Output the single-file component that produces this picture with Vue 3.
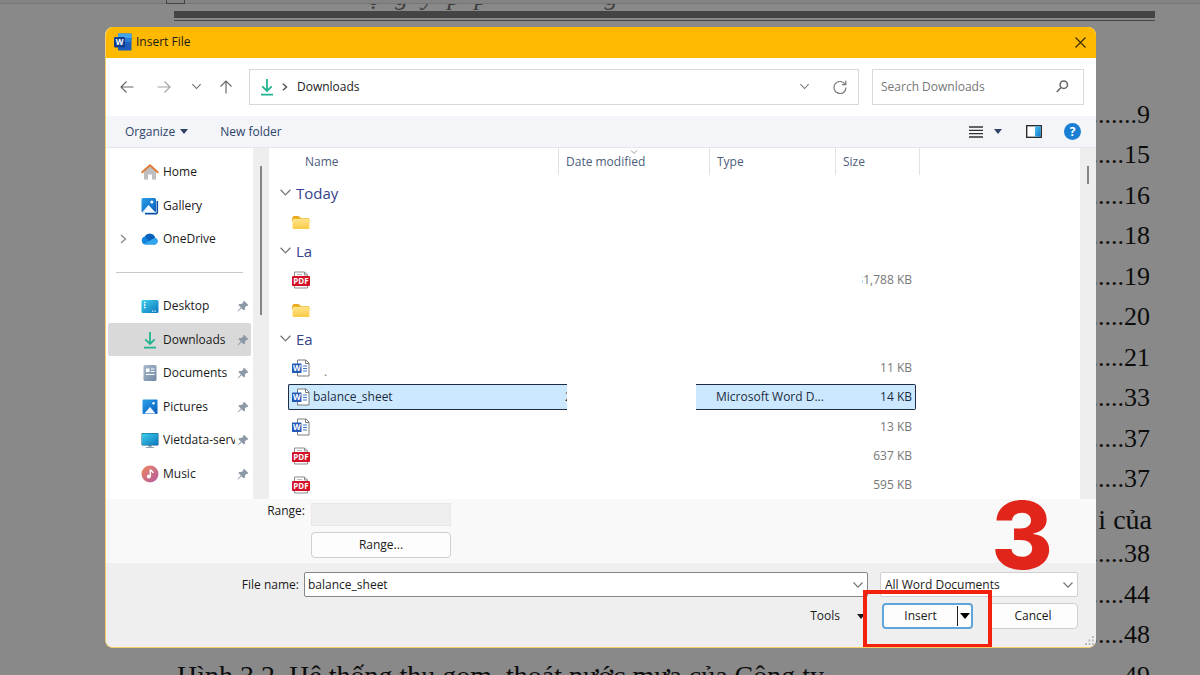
<script setup>
import { ref } from 'vue'

const fileName = ref('balance_sheet')
const query = ref('')
const range = ref('')
const fileType = ref('All Word Documents')

const pageRefs = [
  { page: '9' },
  { page: '15' },
  { page: '16' },
  { page: '18' },
  { page: '19' },
  { page: '20' },
  { page: '21' },
  { page: '33' },
  { page: '37' },
  { page: '37' },
  { words: 'i của' },
  { page: '38' },
  { page: '44' },
  { page: '48' },
]

const places = [
  { name: 'Home', icon: 'home' },
  { name: 'Gallery', icon: 'gallery' },
  { name: 'OneDrive', icon: 'cloud', expandable: true },
  { separator: true },
  { name: 'Desktop', icon: 'desktop', pinned: true },
  { name: 'Downloads', icon: 'download', pinned: true, current: true },
  { name: 'Documents', icon: 'documents', pinned: true },
  { name: 'Pictures', icon: 'pictures', pinned: true },
  { name: 'Vietdata-server', icon: 'monitor', pinned: true },
  { name: 'Music', icon: 'music', pinned: true },
]

const rows = [
  { group: 'Today' },
  { icon: 'folder' },
  { group: 'La' },
  { icon: 'pdf', size: '31,788 KB' },
  { icon: 'folder' },
  { group: 'Ea' },
  { icon: 'word-file', size: '11 KB', mark: '.' },
  { icon: 'word-file', name: 'balance_sheet', date: '2', type: 'Microsoft Word D...', size: '14 KB', selected: true },
  { icon: 'word-file', size: '13 KB' },
  { icon: 'pdf', size: '637 KB' },
  { icon: 'pdf', size: '595 KB' },
]
</script>

<template>
  <main class="stage">
    <svg class="sprite" aria-hidden="true">
      <defs>
        <linearGradient id="g-sky" x1="0" y1="0" x2="1" y2="1">
          <stop offset="0" stop-color="#2aa0ea" /><stop offset="1" stop-color="#0a5cbc" />
        </linearGradient>
        <linearGradient id="g-teal" x1="0" y1="0" x2="1" y2="1">
          <stop offset="0" stop-color="#3fd0e8" /><stop offset="1" stop-color="#0c76c0" />
        </linearGradient>
        <linearGradient id="g-folder" x1="0" y1="0" x2="0" y2="1">
          <stop offset="0" stop-color="#ffe48a" /><stop offset="1" stop-color="#fbcb45" />
        </linearGradient>
        <linearGradient id="g-music" x1="0" y1="0" x2="1" y2="1">
          <stop offset="0" stop-color="#ee8a5c" /><stop offset="1" stop-color="#b158a4" />
        </linearGradient>
        <linearGradient id="g-doc" x1="0" y1="0" x2="1" y2="1">
          <stop offset="0" stop-color="#a9bacd" /><stop offset="1" stop-color="#7189a6" />
        </linearGradient>
        <linearGradient id="g-pane" x1="0" y1="0" x2="1" y2="1">
          <stop offset="0" stop-color="#52c3f1" /><stop offset="1" stop-color="#0b74c9" />
        </linearGradient>
      </defs>
      <symbol id="i-home" viewBox="0 0 18 18">
        <path d="M3 8.5 9 3l6 5.500V16.500h-4v-5H7v5H3z" fill="#bfbfc2" />
        <path d="M1.300 9.300 9 2.300l7.700 7" fill="none" stroke="#e07a35" stroke-width="2" stroke-linecap="round" stroke-linejoin="round" />
      </symbol>
      <symbol id="i-gallery" viewBox="0 0 18 18">
        <path d="M16.300 4v11.300a1.500 1.500 0 0 1-1.500 1.500H4" fill="none" stroke="#0c50a5" stroke-width="1.600" />
        <rect x="0.500" y="1" width="14.500" height="14.500" rx="1.500" fill="url(#g-sky)" />
        <path d="M1 15.500 7.500 8l7 7.500z" fill="#f4faff" />
        <circle cx="10.800" cy="5" r="1.500" fill="#fff" />
      </symbol>
      <symbol id="i-cloud" viewBox="0 0 18 18">
        <path d="M4.500 14.500a4 4 0 0 1-.6-7.900 5.500 5.500 0 0 1 10.200 1.200 3.500 3.500 0 0 1 .2 6.700z" fill="#1384dc" />
        <path d="M3.900 6.600a5.500 5.500 0 0 1 10.200 1.200L8 11z" fill="#0a61b8" />
        <path d="M3 14 14.200 7.800a3.500 3.500 0 0 1 .1 6.700H4.500z" fill="#32a7ef" />
      </symbol>
      <symbol id="i-desktop" viewBox="0 0 18 18">
        <rect x="0.500" y="3" width="17" height="13" rx="1.500" fill="url(#g-teal)" />
        <path d="M3 5.500h1.500M3 8h1.500M3 10.500h1.500" stroke="#fff" stroke-width="1.400" />
        <path d="M11 14.200h1.300M13.500 14.200h1.300" stroke="#d5f1ff" stroke-width="1.200" />
      </symbol>
      <symbol id="i-download" viewBox="0 0 18 18">
        <path d="M9 1v12M4.300 8.300 9 13l4.700-4.700M3 16.700h12" fill="none" stroke="#22b491" stroke-width="1.800" />
      </symbol>
      <symbol id="i-documents" viewBox="0 0 18 18">
        <rect x="2.500" y="1" width="13" height="16" rx="1.500" fill="url(#g-doc)" />
        <path d="M5 4.500h3.500v3.500H5z" fill="#fff" />
        <path d="M10 5h3.500M10 7.500h3.500M5 10.500h8.500" stroke="#fff" stroke-width="1.200" />
      </symbol>
      <symbol id="i-pictures" viewBox="0 0 18 18">
        <rect x="1.500" y="1.500" width="15" height="14.500" rx="1" fill="url(#g-sky)" />
        <path d="M3.500 15.500 9 9l5.500 6.500z" fill="#f4faff" />
        <circle cx="12.500" cy="5.300" r="1.200" fill="#fff" />
      </symbol>
      <symbol id="i-monitor" viewBox="0 0 18 18">
        <path d="M7.500 14h3v2h2.500v1H5v-1h2.500z" fill="#8ea6b5" />
        <rect x="0.500" y="2" width="17" height="12.500" rx="1" fill="#0e5a80" />
        <rect x="1" y="2.500" width="16" height="11.500" rx="1" fill="url(#g-teal)" />
      </symbol>
      <symbol id="i-music" viewBox="0 0 18 18">
        <circle cx="9" cy="9" r="8.500" fill="url(#g-music)" />
        <path d="M9.300 11.500V4.500c.8 1.500 2.700 1.600 2.700 3.500" fill="none" stroke="#fff" stroke-width="1.500" />
        <circle cx="7.800" cy="11.600" r="2" fill="#fff" />
      </symbol>
      <symbol id="i-pin" viewBox="0 0 12 12">
        <path d="M7 .8 11.300 5l-1 .9-.7-.1-1.700 1.800.1 2-1 1L4.600 8.200 1.300 11.300l-.6.100.1-.6L3.900 7.500 1.300 5l1.100-1 2.100.1L6.300 2.400l-.1-.8z" fill="#8c98a5" />
      </symbol>
      <symbol id="i-folder" viewBox="0 0 18 18">
        <path d="M.5 4.500A1.500 1.500 0 0 1 2 3h4.500l2 2h7.500a1.500 1.500 0 0 1 1.500 1.500V9H.5z" fill="#e8a820" />
        <rect x="0.500" y="5.500" width="17" height="10.500" rx="1.300" fill="url(#g-folder)" />
        <path d="M.5 7V5.500h7l1-1" fill="none" stroke="#f2b52c" />
      </symbol>
      <symbol id="i-pdf" viewBox="0 0 18 18">
        <path d="M2.500 6V1h10l3 3v13h-13z" fill="#fff" stroke="#8b8b8b" />
        <path d="M12.500 1v3h3" fill="none" stroke="#8b8b8b" />
        <path d="M5 3.500h5" stroke="#bbb" />
        <rect x="0" y="5" width="18" height="10" rx="1" fill="#d40f27" />
      </symbol>
      <symbol id="i-word-file" viewBox="0 0 18 18">
        <path d="M5.500 1h8.500l3 3v13H5.500z" fill="#fff" stroke="#7d7d7d" />
        <path d="M13.500 1v3.500H17" fill="none" stroke="#7d7d7d" />
        <path d="M11 7h4M11 9.500h4M11 12h4" stroke="#3b77c8" />
        <rect x="0" y="4.500" width="9.500" height="9.500" rx="0.500" fill="#2459b8" />
      </symbol>
      <symbol id="i-word" viewBox="0 0 18 18">
        <rect x="4" y="0.500" width="13.500" height="17" rx="1" fill="#1b5cbd" />
        <path d="M4 .5h12.500a1 1 0 0 1 1 1V5H4z" fill="#41a5ee" />
        <path d="M4 5h13.500v4H4z" fill="#2b7cd3" />
        <rect x="0" y="4" width="11" height="10.500" rx="1" fill="#103f91" />
      </symbol>
      <symbol id="i-chevron" viewBox="0 0 12 12">
        <path d="M1.500 3.500 6 8.200l4.500-4.700" fill="none" stroke="currentColor" stroke-width="1.200" />
      </symbol>
      <symbol id="i-caret" viewBox="0 0 10 6">
        <path d="M0 0h10L5 6z" fill="currentColor" />
      </symbol>
    </svg>

    <section class="paper" aria-label="Document">
      <div class="ruler"><span class="tab-stop"></span></div>
      <div class="running-head" aria-hidden="true">
        <i>ọ</i><i>g</i><i>y</i><i>p</i><i>p</i><i>g</i>
      </div>
      <div class="double-rule"></div>
      <ol class="contents">
        <li v-for="(r, i) in pageRefs" :key="i" :class="{ words: r.words }">
          <span v-if="r.words">{{ r.words }}</span>
          <span v-else>.......{{ r.page }}</span>
        </li>
        <li class="caption">
          <span class="caption-text">Hình 3.2. Hệ thống thu gom, thoát nước mưa của Công ty</span>
          <span>49</span>
        </li>
      </ol>
    </section>

    <section class="dialog" role="dialog" aria-labelledby="dialog-title">
      <header class="titlebar">
        <svg class="icon" viewBox="0 0 18 18">
          <use href="#i-word" />
          <text x="5.500" y="12.300" class="glyph w-large">W</text>
        </svg>
        <h1 id="dialog-title">Insert File</h1>
        <button class="plain close" aria-label="Close">
          <svg width="11" height="11" viewBox="0 0 11 11"><path d="M.5.5l10 10M10.500.5l-10 10" stroke="#3a2c00" stroke-width="1.200" /></svg>
        </button>
      </header>

      <nav class="navbar" aria-label="Folder navigation">
        <button class="plain" aria-label="Back">
          <svg width="14" height="14" viewBox="0 0 14 14" class="arrow"><path d="M13.500 7H1M6.500 1.500 1 7l5.500 5.500" /></svg>
        </button>
        <button class="plain dim" aria-label="Forward">
          <svg width="14" height="14" viewBox="0 0 14 14" class="arrow"><path d="M.5 7H13M7.500 1.500 13 7l-5.500 5.500" /></svg>
        </button>
        <button class="plain small" aria-label="Recent locations">
          <svg width="11" height="11"><use href="#i-chevron" /></svg>
        </button>
        <button class="plain" aria-label="Up">
          <svg width="14" height="14" viewBox="0 0 14 14" class="arrow"><path d="M7 13.500V1M1.500 6.500 7 1l5.500 5.500" /></svg>
        </button>
        <div class="address">
          <svg class="icon"><use href="#i-download" /></svg>
          <svg width="6" height="8" viewBox="0 0 6 8" class="crumb"><path d="M1 .8 4.500 4 1 7.200" /></svg>
          <span>Downloads</span>
          <button class="plain push" aria-label="Previous locations">
            <svg width="11" height="11"><use href="#i-chevron" /></svg>
          </button>
          <button class="plain" aria-label="Refresh">
            <svg width="14" height="14" viewBox="0 0 14 14" class="arrow"><path d="M12.200 4.500A6 6 0 1 0 13 7.500M12.800.8v3.900H9" /></svg>
          </button>
        </div>
        <label class="search">
          <input v-model="query" type="text" placeholder="Search Downloads" aria-label="Search Downloads" />
          <svg width="13" height="13" viewBox="0 0 13 13"><circle cx="7.800" cy="4.700" r="3.700" /><path d="M5 7.500.8 12" /></svg>
        </label>
      </nav>

      <div class="commands">
        <button class="plain organize">Organize <svg width="8" height="5"><use href="#i-caret" /></svg></button>
        <button class="plain">New folder</button>
        <button class="plain view" aria-label="View">
          <svg width="14" height="12" viewBox="0 0 14 12"><path d="M0 1h14M0 4.300h14M0 7.600h14M0 11h14" stroke="#333" stroke-width="1.300" /></svg>
          <svg width="8" height="5"><use href="#i-caret" /></svg>
        </button>
        <button class="plain pane" aria-label="Preview pane">
          <svg width="16" height="13" viewBox="0 0 16 13"><rect x="0.700" y="0.700" width="14.600" height="11.600" fill="#fff" stroke="#222" stroke-width="1.300" /><rect x="9" y="1.300" width="5.700" height="10.400" fill="url(#g-pane)" /></svg>
        </button>
        <button class="plain help" aria-label="Help">?</button>
      </div>

      <div class="browser">
        <ul class="places">
          <li v-for="(p, i) in places" :key="i" :class="{ current: p.current }">
            <hr v-if="p.separator" />
            <a v-else href="#">
              <span class="twist">
                <svg v-if="p.expandable" width="7" height="10" viewBox="0 0 7 10"><path d="M1 1l4.500 4L1 9" /></svg>
              </span>
              <svg class="icon"><use :href="'#i-' + p.icon" /></svg>
              <span class="place-name">{{ p.name }}</span>
              <svg v-if="p.pinned" class="pin"><use href="#i-pin" /></svg>
            </a>
          </li>
        </ul>
        <div class="track"><span class="thumb long"></span></div>

        <table class="files">
          <colgroup>
            <col class="c-name" /><col class="c-date" /><col class="c-type" /><col class="c-size" /><col />
          </colgroup>
          <thead>
            <tr>
              <th><span class="head first">Name</span></th>
              <th><span class="head">Date modified<svg class="sort" width="8" height="8"><use href="#i-chevron" /></svg></span></th>
              <th><span class="head">Type</span></th>
              <th><span class="head">Size</span></th>
              <td></td>
            </tr>
          </thead>
          <tbody>
            <tr v-for="(r, i) in rows" :key="i" :class="{ selected: r.selected }">
              <th v-if="r.group" colspan="5" class="group">
                <svg width="13" height="13"><use href="#i-chevron" /></svg>{{ r.group }}
              </th>
              <template v-else>
                <td>
                  <div class="cell name">
                    <svg class="icon" viewBox="0 0 18 18">
                      <use :href="'#i-' + r.icon" />
                      <text v-if="r.icon === 'pdf'" x="9" y="13" class="glyph">PDF</text>
                      <text v-if="r.icon === 'word-file'" x="4.750" y="12" class="glyph">W</text>
                    </svg>
                    <span>{{ r.name }}</span><span v-if="r.mark" class="mark">{{ r.mark }}</span>
                  </div>
                </td>
                <td><div class="cell date">{{ r.date }}<span v-if="r.selected" class="blank"></span></div></td>
                <td><div class="cell type">{{ r.type }}</div></td>
                <td><div class="cell size"><span>{{ r.size }}</span></div></td>
                <td></td>
              </template>
            </tr>
          </tbody>
        </table>
        <div class="track"><span class="thumb"></span></div>
      </div>

      <div class="range">
        <label for="range">Range:</label>
        <div class="range-fields">
          <input id="range" v-model="range" type="text" />
          <button class="push-button">Range...</button>
        </div>
      </div>

      <footer class="footer">
        <div class="line">
          <label for="file-name">File name:</label>
          <div class="combo">
            <input id="file-name" v-model="fileName" type="text" />
            <svg width="12" height="12"><use href="#i-chevron" /></svg>
          </div>
          <div class="picker">
            <select v-model="fileType" aria-label="File type">
              <option>All Word Documents</option>
            </select>
            <svg width="12" height="12"><use href="#i-chevron" /></svg>
          </div>
        </div>
        <div class="line actions">
          <button class="plain tools">Tools <svg width="8" height="5"><use href="#i-caret" /></svg></button>
          <div class="insert">
            <button class="insert-main">Insert</button>
            <button class="insert-more" aria-label="Insert options"><svg width="10" height="6"><use href="#i-caret" /></svg></button>
            <span class="callout"></span>
          </div>
          <button class="push-button cancel">Cancel</button>
        </div>
        <strong class="step">3</strong>
        <svg class="grip" width="9" height="9" viewBox="0 0 9 9"><path d="M7 0h2v2H7zM3.500 3.500h2v2h-2zM7 3.500h2v2H7zM0 7h2v2H0zM3.500 7h2v2h-2zM7 7h2v2H7z" fill="#bdbdbd" /></svg>
      </footer>
    </section>
  </main>
</template>

<style>
body {
  margin: 0;
  background: #898989;
}
</style>

<style scoped>
* {
  box-sizing: border-box;
}
.stage {
  position: relative;
  height: 100vh;
  overflow: hidden;
  background: #898989;
  color: #1a1a1a;
  font-family: "Open Sans", "Noto Sans", sans-serif;
  font-size: 12px;
  line-height: 16px;
}
.sprite {
  position: absolute;
  width: 0;
  height: 0;
}
svg {
  flex: none;
  display: block;
}
.icon {
  width: 18px;
  height: 18px;
}
.glyph {
  fill: #fff;
  font-size: 8px;
  font-weight: 700;
  text-anchor: middle;
}

/* document behind the dialog */
.paper {
  font-family: "Liberation Serif", serif;
  font-size: 26px;
  color: #0c0c0c;
}
.ruler {
  height: 4px;
  padding-left: 166px;
  border-bottom: 1px solid #767676;
  background: #838383;
}
.tab-stop {
  display: block;
  width: 19px;
  height: 4px;
  border: 1px solid #444;
  border-top: 0;
}
.running-head {
  display: flex;
  height: 6px;
  padding-left: 368px;
  overflow: hidden;
  line-height: 6px;
  color: #3c3c3c;
  align-items: flex-end;
  gap: 14px;
}
.running-head i {
  height: 26px;
  line-height: 26px;
}
.running-head i:last-child {
  margin-left: 103px;
}
.double-rule {
  height: 10px;
  margin: 1px 45px 0 174px;
  border-top: 7px solid #444;
  border-bottom: 1px solid #444;
}
.contents {
  margin: 0;
  padding: 74px 50px 0 177px;
  list-style: none;
}
.contents li {
  display: flex;
  justify-content: flex-end;
  height: 40px;
  line-height: 40px;
}
.contents li:nth-child(even) {
  height: 41px;
}
.contents li.words {
  height: 34px;
  margin-right: -2px;
  font-size: 28px;
}
.contents li.caption {
  justify-content: space-between;
}
.caption-text {
  font-size: 28px;
}

/* dialog frame */
.dialog {
  position: absolute;
  top: 27px;
  left: 105px;
  right: 104px;
  overflow: hidden;
  border: 0 solid #f7cf69;
  border-width: 0 0 1px 1px;
  border-radius: 8px;
  background: #fff;
}
button,
input,
select {
  font: inherit;
  color: inherit;
}
.plain {
  display: flex;
  align-items: center;
  justify-content: center;
  margin: 0;
  padding: 0;
  border: 0;
  background: none;
}
.push {
  margin-left: auto;
}
.titlebar {
  display: flex;
  align-items: center;
  height: 31px;
  margin-left: -1px;
  padding: 0 10px 1px 9px;
  background: #ffb900;
}
.titlebar h1 {
  margin: 0 auto 0 4px;
  font-size: 12px;
  font-weight: 400;
}

/* navigation */
.navbar {
  display: flex;
  align-items: center;
  height: 58px;
  padding: 0 12px 1px 14px;
  color: #6a6a6a;
}
.navbar > button {
  width: 14px;
  margin-right: 23px;
}
.navbar > .dim {
  margin-right: 18px;
  opacity: 0.6;
}
.navbar > .small {
  margin-right: 16px;
}
.arrow path {
  fill: none;
  stroke: currentColor;
  stroke-width: 1.200;
}
.address,
.search {
  display: flex;
  align-items: center;
  height: 36px;
  border: 1px solid #d9d9d9;
  background: #fff;
}
.address {
  flex: 1;
  margin-left: -7px;
  padding: 0 11px 0 8px;
  color: #222;
}
.address .plain {
  color: #777;
}
.address .push {
  margin-right: 23px;
}
.crumb {
  margin: 0 9px 0 6px;
}
.crumb path {
  fill: none;
  stroke: #555;
  stroke-width: 1.500;
}
.search {
  flex: none;
  width: 212px;
  margin-left: 13px;
  padding: 0 14px 0 8px;
}
.search input {
  flex: 1;
  min-width: 0;
  padding: 0;
  border: 0;
  outline: 0;
  background: none;
}
.search input::placeholder {
  color: #777;
  opacity: 1;
}
.search svg {
  fill: none;
  stroke: #666;
  stroke-width: 1.500;
}

/* command bar */
.commands {
  display: flex;
  align-items: center;
  height: 32px;
  padding: 0 15px 0 19px;
  border-bottom: 1px solid #e3e6ea;
  background: #f3f5f8;
  color: #2f4368;
}
.organize {
  gap: 5px;
  margin-right: 32px;
}
.view {
  gap: 11px;
  margin-left: auto;
}
.pane {
  margin: 0 22px 0 24px;
}
.help {
  width: 17px;
  height: 17px;
  border-radius: 50%;
  background: #1a7fd4;
  color: #fff;
  font-weight: 700;
}

/* folder tree */
.browser {
  display: flex;
}
.places {
  flex: none;
  width: 147px;
  margin: 0;
  padding: 7px 2px 0;
  list-style: none;
}
.places li {
  display: flex;
  align-items: center;
  height: 34px;
}
.places li:nth-child(even) {
  height: 33px;
}
.places .current {
  border-radius: 2px;
  background: #d9d9d9;
}
.places hr {
  flex: 1;
  margin: 0 8px;
  border: 0;
  border-top: 1px solid #c9c9c9;
}
.places a {
  display: flex;
  flex: 1;
  align-items: center;
  min-width: 0;
  padding-right: 2px;
  color: #1a1a1a;
  text-decoration: none;
}
.twist {
  flex: none;
  width: 21px;
  margin-left: 12px;
}
.twist path {
  fill: none;
  stroke: #888;
  stroke-width: 1.300;
}
.place-name {
  flex: 1;
  min-width: 0;
  margin: 0 2px 0 4px;
  overflow: hidden;
  white-space: nowrap;
}
.pin {
  width: 12px;
  height: 12px;
}
.track {
  flex: none;
  width: 16px;
  padding: 18px 7px 0;
  background: #eee;
}
.thumb {
  display: block;
  width: 2px;
  height: 18px;
  background: #858585;
}
.thumb.long {
  height: 149px;
}

/* file list */
.files {
  flex: 1;
  width: 0;
  table-layout: fixed;
  border-collapse: collapse;
}
.c-name {
  width: 290px;
}
.c-date {
  width: 151px;
}
.c-type {
  width: 126px;
}
.c-size {
  width: 84px;
}
.files th,
.files td {
  padding: 0;
  font-weight: 400;
  text-align: left;
}
.files thead th {
  height: 30px;
  color: #4c5d7a;
  vertical-align: top;
}
.head {
  display: block;
  position: relative;
  height: 27px;
  padding: 6px 7px 0;
  border-right: 1px solid #e2e2e2;
}
.head.first {
  padding-left: 36px;
}
.sort {
  position: absolute;
  top: 0;
  left: 71px;
  color: #888;
}
.files tbody tr {
  height: 29px;
}
.files tbody tr:nth-child(4n) {
  height: 30px;
}
.files .group {
  padding-left: 10px;
  color: #35438c;
  font-size: 15px;
}
.group svg {
  display: inline-block;
  margin-right: 4px;
  color: #777;
}
.cell {
  display: flex;
  position: relative;
  align-items: center;
  height: 26px;
  border: 0 solid #1c2c40;
  color: #777;
  white-space: nowrap;
}
.name {
  margin-left: 19px;
  padding-left: 4px;
  gap: 3px;
}
.mark {
  padding-top: 8px;
  margin-left: 8px;
}
.date,
.type {
  padding-left: 6px;
}
.size {
  justify-content: flex-end;
  margin-right: 4px;
  padding-right: 4px;
}
.size span {
  display: flex;
  justify-content: flex-end;
  max-width: 50px;
  overflow: hidden;
}
.selected .cell {
  border-width: 1px 0;
  background: #cce8ff;
  color: #1c2c40;
}
.selected .name {
  padding-left: 3px;
  border-left-width: 1px;
  border-radius: 2px 0 0 2px;
}
.selected .size {
  padding-right: 3px;
  border-right-width: 1px;
  border-radius: 0 2px 2px 0;
}
.blank {
  position: absolute;
  inset: -1px 14px -1px 8px;
  background: #fff;
}

/* range */
.range {
  display: flex;
  height: 64px;
  padding-top: 4px;
  background: #f9f9f9;
}
.range label {
  width: 199px;
  text-align: right;
}
.range-fields {
  display: flex;
  flex-direction: column;
  gap: 6px;
  width: 140px;
  margin-left: 6px;
}
.range-fields input {
  width: 100%;
  height: 23px;
  border: 1px solid #e8e8e8;
  background: #efefef;
}
.push-button {
  height: 26px;
  padding: 0;
  border: 1px solid #cfcfcf;
  border-radius: 4px;
  background: #fdfdfd;
}

/* footer */
.footer {
  position: relative;
  padding: 9px 18px 18px 0;
  background: #efefef;
}
.line {
  display: flex;
  align-items: center;
}
.line label {
  width: 193px;
  margin-right: 5px;
  text-align: right;
}
.combo,
.picker {
  display: flex;
  align-items: center;
  position: relative;
  height: 25px;
  border: 1px solid #868686;
  border-radius: 2px;
  background: #fff;
  color: #1a1a1a;
}
.combo {
  flex: 1;
  padding-right: 3px;
}
.combo input,
.picker select {
  flex: 1;
  min-width: 0;
  height: 100%;
  padding: 0 3px;
  border: 0;
  outline: 0;
  appearance: none;
  background: none;
}
.combo svg,
.picker svg {
  color: #777;
}
.picker {
  width: 198px;
  margin-left: 12px;
  border-color: #d0d0d0;
}
.picker select {
  padding: 0 4px;
}
.picker svg {
  position: absolute;
  right: 3px;
}
.actions {
  justify-content: flex-end;
  margin-top: 6px;
}
.tools {
  gap: 17px;
  margin-right: 17px;
}
.insert {
  display: flex;
  position: relative;
  width: 91px;
  height: 26px;
  border: 2px solid #5ea6da;
  border-radius: 4px;
  background: #fdfdfd;
}
.insert button {
  display: flex;
  align-items: center;
  justify-content: center;
  padding: 0;
  border: 0;
  background: none;
}
.insert-main {
  flex: 1;
}
.insert .insert-more {
  width: 14px;
  margin: 1px 0;
  border-left: 1px solid #222;
  color: #000;
}
.callout {
  position: absolute;
  z-index: 2;
  inset: -15px -21px -21px;
  border: 4px solid #f5210f;
  pointer-events: none;
}
.cancel {
  width: 90px;
  margin-left: 15px;
}
.step {
  position: absolute;
  right: 43px;
  bottom: 64px;
  color: #e1251b;
  font-family: Inter, sans-serif;
  font-size: 94px;
  font-weight: 800;
  line-height: 96px;
}
.grip {
  position: absolute;
  right: 2px;
  bottom: 2px;
}
</style>
